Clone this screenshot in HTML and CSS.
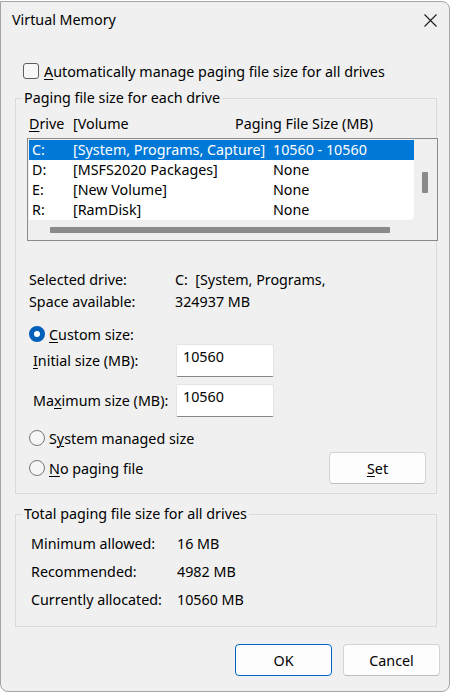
FILE: index.html
```html
<!DOCTYPE html>
<html lang="en">
<head>
<meta charset="UTF-8">
<meta name="viewport" content="width=device-width, initial-scale=1.0">
<title>Virtual Memory</title>
<link rel="stylesheet" href="styles.css">
</head>
<body>
<div class="window">
    <div class="titlebar">
        <span class="title">Virtual Memory</span>
        <svg class="close" width="13" height="13" viewBox="0 0 13 13">
            <path d="M0.5 0.5 L12.5 12.5 M12.5 0.5 L0.5 12.5" stroke="#1b1b1b" stroke-width="1.1" fill="none"/>
        </svg>
    </div>

    <label class="check-row">
        <span class="checkbox"></span>
        <span><u>A</u>utomatically manage paging file size for all drives</span>
    </label>

    <fieldset class="group group-drives">
        <legend>Paging file size for each drive</legend>

        <div class="list-head">
            <span class="col-drive"><u>D</u>rive</span>
            <span class="col-vol">[Volume</span>
            <span>Paging File Size (MB)</span>
        </div>

        <div class="list">
            <div class="list-main">
                <div class="rows">
                    <div class="row selected">
                        <span class="cell-drive">C:</span>
                        <span class="cell-vol">[System, Programs, Capture]</span>
                        <span>10560 - 10560</span>
                    </div>
                    <div class="row">
                        <span class="cell-drive">D:</span>
                        <span class="cell-vol">[MSFS2020 Packages]</span>
                        <span>None</span>
                    </div>
                    <div class="row">
                        <span class="cell-drive">E:</span>
                        <span class="cell-vol">[New Volume]</span>
                        <span>None</span>
                    </div>
                    <div class="row">
                        <span class="cell-drive">R:</span>
                        <span class="cell-vol">[RamDisk]</span>
                        <span>None</span>
                    </div>
                </div>
                <div class="vscroll"><div class="vthumb"></div></div>
            </div>
            <div class="hscroll"><div class="hthumb"></div></div>
        </div>

        <div class="info">
            <div class="info-row"><span class="info-label">Selected drive:</span><span>C:&nbsp; [System, Programs,</span></div>
            <div class="info-row"><span class="info-label">Space available:</span><span>324937 MB</span></div>
        </div>

        <div class="radio-row custom">
            <span class="radio checked"></span>
            <span><u>C</u>ustom size:</span>
        </div>
        <div class="size-row">
            <span class="size-label"><u>I</u>nitial size (MB):</span>
            <div class="textbox">10560</div>
        </div>
        <div class="size-row size-max">
            <span class="size-label">Ma<u>x</u>imum size (MB):</span>
            <div class="textbox">10560</div>
        </div>
        <div class="radio-row system">
            <span class="radio"></span>
            <span>S<u>y</u>stem managed size</span>
        </div>
        <div class="radio-row nopaging">
            <span class="radio"></span>
            <span><u>N</u>o paging file</span>
            <button class="btn btn-set"><u>S</u>et</button>
        </div>
    </fieldset>

    <fieldset class="group group-total">
        <legend>Total paging file size for all drives</legend>
        <div class="total-row"><span class="total-label">Minimum allowed:</span><span>16 MB</span></div>
        <div class="total-row"><span class="total-label">Recommended:</span><span>4982 MB</span></div>
        <div class="total-row"><span class="total-label">Currently allocated:</span><span>10560 MB</span></div>
    </fieldset>

    <div class="actions">
        <button class="btn btn-ok">OK</button>
        <button class="btn">Cancel</button>
    </div>
</div>
</body>
</html>
```
FILE: styles.css
```css
* {
    box-sizing: border-box;
}
body {
    margin: 0;
    padding-top: 1px;
    background: #fff;
    font-family: "Noto Sans", "Open Sans", sans-serif;
    font-size: 14.3px;
    color: #000;
}
u {
    text-decoration-thickness: 1px;
    text-underline-offset: 2px;
}

/* dialog frame */
.window {
    width: 450px;
    background: #f0f0f0;
    border: 1px solid #a3a3a3;
    border-radius: 0 8px 8px 8px;
    padding-bottom: 15px;
}
.titlebar {
    height: 36px;
    display: flex;
    align-items: center;
    justify-content: space-between;
    padding: 0 12px 0 11px;
}
.title {
    line-height: 20px;
}
.close {
    display: block;
}

/* checkbox line */
.check-row {
    display: flex;
    align-items: center;
    height: 20px;
    margin-top: 23px;
    padding-left: 22px;
    gap: 5px;
}
.checkbox {
    width: 16px;
    height: 16px;
    border: 1px solid #5d5d5d;
    border-radius: 3px;
    background: #f7f7f7;
}

/* group boxes */
.group {
    width: 422px;
    margin: 7px 0 0 14px;
    padding: 0;
    border: 1px solid #dadada;
    min-width: 0;
}
.group legend {
    margin-left: 6px;
    padding: 0 2px;
    line-height: 20px;
}
.group-drives {
    padding-bottom: 9px;
}

.list-head {
    display: flex;
    height: 20px;
    line-height: 20px;
    margin-top: 6px;
    padding-left: 13px;
}
.col-drive {
    width: 44px;
}
.col-vol {
    width: 162px;
}

/* drive list */
.list {
    width: 411px;
    margin: 4px 0 0 11px;
    border: 1px solid #8b8b8b;
    background: #efefef;
}
.list-main {
    display: flex;
}
.rows {
    width: 385px;
    height: 80px;
    margin: 1px 0 0 1px;
    background: #fff;
    border-bottom-right-radius: 4px;
}
.row {
    display: flex;
    height: 20px;
    line-height: 20px;
}
.row.selected {
    background: #0078d7;
    color: #fff;
}
.cell-drive {
    width: 44px;
    padding-left: 3px;
}
.cell-vol {
    width: 200px;
}
.vscroll {
    width: 23px;
    padding: 33px 0 0 8px;
}
.vthumb {
    width: 6px;
    height: 21px;
    background: #8a8a8a;
    border-radius: 1px;
}
.hscroll {
    height: 20px;
    padding: 7px 0 0 22px;
}
.hthumb {
    width: 340px;
    height: 6px;
    background: #8a8a8a;
    border-radius: 1px;
}

.info {
    margin-top: 27px;
}
.info-row,
.total-row {
    display: flex;
    align-items: center;
    height: 22px;
    padding-left: 13px;
}
.info-label {
    width: 146px;
}

/* radios and size inputs */
.radio-row {
    display: flex;
    align-items: center;
    height: 20px;
    padding-left: 13px;
    gap: 4px;
}
.radio-row.custom {
    margin-top: 12px;
}
.radio-row.system {
    margin-top: 11px;
}
.radio-row.nopaging {
    margin-top: 4px;
    height: 32px;
}
.radio {
    width: 16px;
    height: 16px;
    border: 1px solid #777;
    border-radius: 50%;
    background: #f6f6f6;
}
.radio.checked {
    border: 5px solid #005fb8;
    background: #fff;
}
.size-row {
    display: flex;
    align-items: center;
    height: 33px;
    padding-left: 17px;
}
.size-max {
    margin-top: 7px;
}
.size-label {
    width: 143px;
}
.textbox {
    width: 98px;
    height: 33px;
    padding: 2px 0 0 6px;
    line-height: 20px;
    background: #fff;
    border: 1px solid #e3e3e3;
    border-bottom-color: #868686;
    border-radius: 2px;
}

/* push buttons */
.btn {
    width: 97px;
    height: 32px;
    font: inherit;
    color: #000;
    background: #fdfdfd;
    border: 1px solid #d3d3d3;
    border-bottom-color: #bdbdbd;
    border-radius: 4px;
    padding: 0;
}
.btn-set {
    margin-left: auto;
    margin-right: 10px;
}
.btn-ok {
    border-color: #0067c0;
}

.group-total {
    margin-top: 10px;
    padding: 5px 0 13px;
}
.total-row {
    height: 28px;
    padding-left: 15px;
}
.total-label {
    width: 146px;
}

.actions {
    display: flex;
    justify-content: flex-end;
    gap: 11px;
    margin-top: 17px;
    padding-right: 9px;
}
```
